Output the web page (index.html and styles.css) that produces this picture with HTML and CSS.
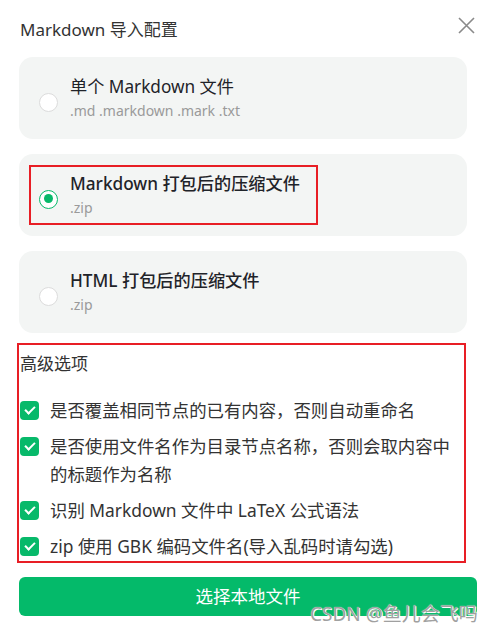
FILE: index.html
```html
<html>
    <head>
        <meta http-equiv="Content-Type" content="text/html; charset=utf-8" />
        <title>Markdown 导入配置</title>
        <link rel="stylesheet" href="styles.css">
    </head>
    <body>
        <div class="header">
            <span class="title">Markdown 导入配置</span>
            <svg class="close" width="17" height="17" viewBox="0 0 17 17">
                <path d="M1 1 L16 16 M16 1 L1 16" stroke="#8a8a8a" stroke-width="1.6" fill="none"/>
            </svg>
        </div>

        <div class="cards">
            <div class="card">
                <span class="radio"></span>
                <div class="info">
                    <div class="name">单个 Markdown 文件</div>
                    <div class="ext">.md .markdown .mark .txt</div>
                </div>
            </div>
            <div class="card">
                <span class="radio checked"></span>
                <div class="info">
                    <div class="name strong">Markdown 打包后的压缩文件</div>
                    <div class="ext">.zip</div>
                </div>
                <div class="mark mark-card"></div>
            </div>
            <div class="card">
                <span class="radio"></span>
                <div class="info">
                    <div class="name strong">HTML 打包后的压缩文件</div>
                    <div class="ext">.zip</div>
                </div>
            </div>
        </div>

        <div class="advanced">
            <div class="adv-title">高级选项</div>
            <div class="option">
                <span class="check"></span>
                <span class="label">是否覆盖相同节点的已有内容，否则自动重命名</span>
            </div>
            <div class="option">
                <span class="check"></span>
                <span class="label">是否使用文件名作为目录节点名称，否则会取内容中的标题作为名称</span>
            </div>
            <div class="option">
                <span class="check"></span>
                <span class="label">识别 Markdown 文件中 LaTeX 公式语法</span>
            </div>
            <div class="option">
                <span class="check"></span>
                <span class="label">zip 使用 GBK 编码文件名(导入乱码时请勾选)</span>
            </div>
        </div>

        <div class="commit">选择本地文件</div>

        <div class="watermark">CSDN @鱼儿会飞吗</div>
    </body>
</html>
```

FILE: styles.css
```css
body {
    margin: 0;
    padding: 18px 20px 0 19px;
    background-color: #ffffff;
    font-family: "Noto Sans", "Noto Sans CJK SC", sans-serif;
    color: #333333;
    position: relative;
    height: 634px;
    box-sizing: border-box;
}

.header {
    display: flex;
    justify-content: space-between;
    align-items: flex-start;
    margin-bottom: 15px;
}

.title {
    font-size: 17px;
    line-height: 24px;
    padding-left: 1px;
    color: #333333;
}

.close {
    margin-top: -1px;
    margin-right: 2px;
}

.cards {
    display: flex;
    flex-direction: column;
    gap: 15px;
    width: 448px;
}

.card {
    position: relative;
    display: flex;
    align-items: center;
    gap: 12px;
    background-color: #f3f5f4;
    border-radius: 14px;
    padding: 18px 20px;
    height: 46px;
}

.radio {
    flex: none;
    width: 19px;
    height: 19px;
    margin-top: 8px;
    box-sizing: border-box;
    border: 1px solid #dcdcdc;
    border-radius: 50%;
    background-color: #ffffff;
    position: relative;
}

.radio.checked {
    border: 1.5px solid #07b96a;
}

.radio.checked::after {
    content: "";
    position: absolute;
    left: 3.5px;
    top: 3.5px;
    width: 9px;
    height: 9px;
    border-radius: 50%;
    background-color: #07b96a;
}

.name {
    font-size: 17.2px;
    line-height: 24px;
    color: #1f2329;
}

.name.strong {
    font-weight: 500;
}

.ext {
    margin-top: 2px;
    font-size: 14px;
    line-height: 20px;
    color: #9a9a9a;
}

.mark {
    position: absolute;
    border: 2px solid #e81e25;
}

.mark-card {
    left: 10px;
    top: 11px;
    width: 285px;
    height: 56px;
}

.advanced {
    margin: 10px 0 0 -2px;
    width: 444px;
    border: 2px solid #e81e25;
    padding: 5px 0 1px 1px;
}

.adv-title {
    font-size: 17px;
    line-height: 28px;
    margin-bottom: 18px;
}

.option {
    display: flex;
    align-items: flex-start;
    gap: 11px;
    margin-bottom: 8px;
}

.option:last-child {
    margin-bottom: 0;
}

.check {
    flex: none;
    width: 19px;
    height: 19px;
    margin-top: 4.5px;
    border-radius: 4px;
    background-color: #07b96a;
    position: relative;
}

.check::after {
    content: "";
    position: absolute;
    left: 6.5px;
    top: 3px;
    width: 4px;
    height: 8px;
    border: solid #ffffff;
    border-width: 0 2px 2px 0;
    transform: rotate(45deg);
}

.label {
    font-size: 17.4px;
    line-height: 28px;
    color: #333333;
}

.commit {
    margin-top: 14px;
    height: 39px;
    line-height: 39px;
    border-radius: 6px;
    background-color: #04ba6a;
    color: #ffffff;
    font-size: 17.5px;
    text-align: center;
}

.watermark {
    position: absolute;
    left: 310px;
    top: 601px;
    font-size: 19px;
    line-height: 26px;
    color: #a0a0a0;
    text-shadow: 0 0 1px #ffffff, 1px 1px 0 #ffffff;
    white-space: nowrap;
}
```
